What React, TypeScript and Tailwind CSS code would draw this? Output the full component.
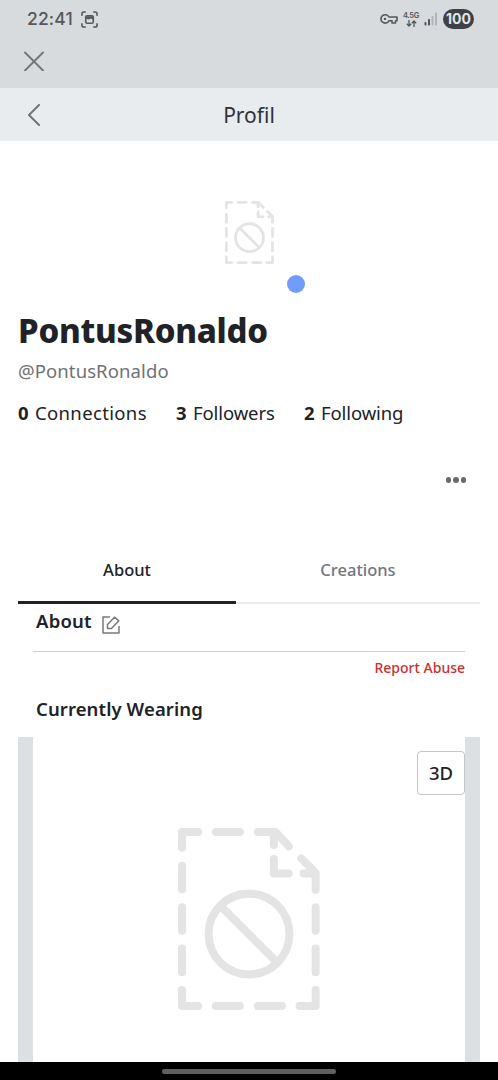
import { ReactNode } from 'react';

function MissingFileIcon({ className }: { className: string }) {
  return (
    <svg viewBox="55 53 425 545" className={className} fill="none" stroke="currentColor" strokeWidth="24" strokeLinecap="round" strokeLinejoin="round">
      <path d="M67 112V65H115" />
      <path d="M168 65H240M294 65H347L387 108" />
      <path d="M342 70V104M342 146V189H386" />
      <path d="M424 144L467 187V238M467 189H431" />
      <path d="M67 166V237M67 290V361M67 414V485" />
      <path d="M467 290V361M467 414V485" />
      <path d="M67 538V586H115M168 586H240M294 586H366M419 586H467V538" />
      <circle cx="267.500" cy="370.500" r="121" />
      <path d="M186 290L350 454" strokeLinecap="butt" />
    </svg>
  );
}

function StatusBar() {
  return (
    <div className="flex h-[38px] items-center justify-between pl-[27px] pr-6 text-[#55585b]">
      <div className="flex items-center gap-2">
        <span className="w-[46px] whitespace-nowrap font-['Inter'] text-[17.5px] font-medium leading-none tracking-[0.15px]">22:41</span>
        <svg viewBox="0 0 18 18" className="h-[17px] w-[17px]" fill="none" stroke="currentColor" strokeWidth="1.700" strokeLinecap="round">
          <path d="M1 4.500V3Q1 1 3 1H4.500M13.500 1H15Q17 1 17 3V4.500M1 13.500V15Q1 17 3 17H4.500M13.500 17H15Q17 17 17 15V13.500" />
          <rect x="5" y="5" width="8" height="8" rx="1.500" />
          <path d="M5.200 8L8 9L10.500 8L12.800 9V5.500H5.200Z" fill="currentColor" stroke="none" />
        </svg>
      </div>
      <div className="flex items-center">
        <svg viewBox="0 0 18 12" className="mr-[5px] h-3 w-[18px]" fill="none" stroke="currentColor" strokeWidth="1.600" strokeLinejoin="round">
          <path d="M8.900 4H17V7.800H15.500V10H12V7.800H8.900A4.200 4.200 0 1 1 8.900 4Z" />
          <circle cx="5" cy="5.900" r="1.200" fill="currentColor" stroke="none" />
        </svg>
        <div className="mr-[5px] flex w-4 flex-col items-center">
          <span className="font-['Inter'] text-[7.5px] font-semibold leading-[7px] tracking-[-0.3px]">4.5G</span>
          <svg viewBox="0 0 11 7" className="mt-px h-[7px] w-[11px]" fill="none" stroke="currentColor" strokeWidth="1.300">
            <path d="M3 0V6M0.800 3.800L3 6L5.200 3.800M8 7V1M5.800 3.200L8 1L10.200 3.200" />
          </svg>
        </div>
        <svg viewBox="0 0 14 14" className="mr-[5px] h-[14px] w-[14px]" fill="currentColor">
          <rect x="0.500" y="10" width="2" height="3.500" rx="0.800" />
          <rect x="4" y="7" width="2" height="6.500" rx="0.800" />
          <rect x="7.500" y="4" width="2" height="9.500" rx="0.800" opacity="0.300" />
          <rect x="11" y="0.500" width="2" height="13" rx="0.800" opacity="0.300" />
        </svg>
        <span className="flex h-5 w-[31px] items-center justify-center rounded-full bg-[#3f4245] font-['Inter'] text-[14px] font-bold leading-none text-[#e2e5e7]">100</span>
      </div>
    </div>
  );
}

function Stat({ value, className, children }: { value: number; className: string; children: ReactNode }) {
  return (
    <span className="flex gap-[6px] whitespace-nowrap">
      <b className="w-[11px] font-bold">{value}</b>
      <span className={className}>{children}</span>
    </span>
  );
}

export default function App() {
  return (
    <div className="flex h-[1080px] w-[498px] flex-col overflow-hidden bg-white font-['Noto_Sans',sans-serif] text-[#202227]">
      <header className="h-[88px] shrink-0 bg-[#d7dbde]">
        <StatusBar />
        <button aria-label="Close" className="ml-6 mt-[13px] block text-[#727578]">
          <svg viewBox="0 0 20 20" className="h-5 w-5" fill="none" stroke="currentColor" strokeWidth="1.900" strokeLinecap="round">
            <path d="M1 1.500L19 19.500M19 1.500L1 19.500" />
          </svg>
        </button>
      </header>

      <nav className="grid h-[53px] shrink-0 grid-cols-[68px_1fr_68px] items-center bg-[#e8ecef]">
        <button aria-label="Back" className="ml-[27px] text-[#727578]">
          <svg viewBox="0 0 14 22" className="h-[22px] w-[14px]" fill="none" stroke="currentColor" strokeWidth="2" strokeLinecap="round" strokeLinejoin="round">
            <path d="M12 1L2 11L12 21" />
          </svg>
        </button>
        <h1 className="text-center text-[21px] leading-7 text-[#303236]">Profil</h1>
      </nav>

      <main className="flex min-h-0 flex-1 flex-col px-[18px]">
        <div className="relative mt-[60px] flex h-[63px] shrink-0 justify-center">
          <MissingFileIcon className="h-[63px] w-[49px] text-[#e4e4e4]" />
          <span className="absolute left-[269px] top-[74px] h-[18px] w-[18px] rounded-full bg-[#709dfc]" />
        </div>

        <h2 className="mt-[47px] whitespace-nowrap text-[33px] font-extrabold leading-10 tracking-[-0.25px]">PontusRonaldo</h2>
        <p className="mt-[6px] text-[18.5px] leading-7 tracking-[0.1px] text-[#707174]">@PontusRonaldo</p>
        <div className="mt-[14px] flex text-[18.5px] leading-7">
          <div className="w-[158px]">
            <Stat value={0} className="tracking-[0.35px]">Connections</Stat>
          </div>
          <div className="w-32">
            <Stat value={3} className="tracking-[-0.1px]">Followers</Stat>
          </div>
          <Stat value={2} className="tracking-[-0.1px]">Following</Stat>
        </div>

        <button aria-label="More" className="mr-[14px] mt-[50px] flex h-[6px] gap-[2px] self-end">
          <span className="h-[5.5px] w-[5.5px] rounded-full bg-[#68696c]" />
          <span className="h-[5.5px] w-[5.5px] rounded-full bg-[#68696c]" />
          <span className="h-[5.5px] w-[5.5px] rounded-full bg-[#68696c]" />
        </button>

        <div className="mt-[54px] flex h-[67px] shrink-0 text-center text-[16.5px] font-medium leading-6">
          <div className="w-[218px] border-b-[3px] border-[#202227] pt-[21px]">About</div>
          <div className="flex-1 border-b-2 border-[#ebecee] pt-[21px] text-[#727583]">Creations</div>
        </div>

        <section className="mx-[15px] flex h-12 shrink-0 items-start border-b border-[#cfd0d1] pl-[3px] pt-[3px]">
          <h3 className="w-14 text-[18.5px] font-semibold leading-7 tracking-[0.2px]">About</h3>
          <svg viewBox="0 0 18 18" className="ml-[10px] mt-[9px] h-[18px] w-[18px] text-[#77797c]" fill="none" stroke="currentColor" strokeWidth="1.500" strokeLinejoin="round">
            <path d="M8 1H1V17H17V10" />
            <path d="M5.500 12.500V8.500L12.500 1.200L16.800 4.800L9.500 12.500Z" />
          </svg>
        </section>
        <a className="mr-[15px] mt-[6px] self-end whitespace-nowrap text-[14px] font-medium leading-5 text-[#c9302c]">Report Abuse</a>

        <h3 className="ml-[18px] mt-[17px] text-[18.5px] font-semibold leading-7 tracking-[0.1px]">Currently Wearing</h3>
        <section className="mt-[14px] flex min-h-0 flex-1 flex-col border-x-[15px] border-[#dde0e3]">
          <button className="mt-[14px] h-[44px] w-12 shrink-0 self-end rounded-[4px] border border-[#c3c5c8] text-[18.5px] font-medium leading-10">3D</button>
          <MissingFileIcon className="mt-[33px] h-[182px] w-[142px] shrink-0 self-center text-[#e4e4e4]" />
        </section>
      </main>

      <footer className="flex h-[18px] shrink-0 items-center justify-center bg-black">
        <div className="h-[5px] w-[174px] rounded-full bg-[#606060]" />
      </footer>
    </div>
  );
}
